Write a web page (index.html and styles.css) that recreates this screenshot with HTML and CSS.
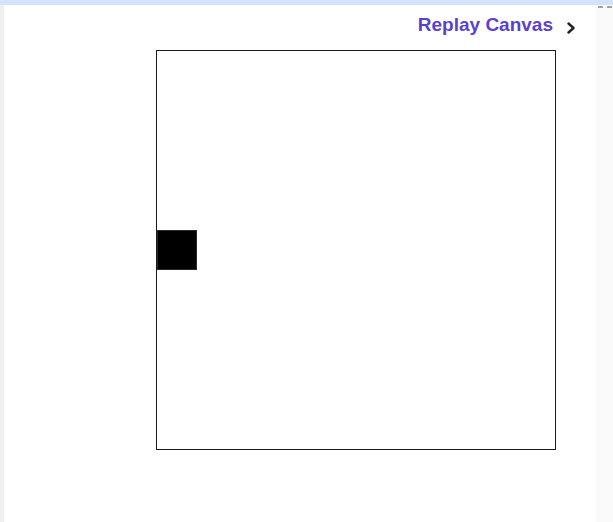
FILE: index.html
```html
<!DOCTYPE html>
<html>
<head>
<meta charset="utf-8">
<link rel="stylesheet" href="styles.css">
</head>
<body>
<div class="topbar"></div>
<div class="row">
  <div class="leftstrip"></div>
  <main class="main">
    <div class="header">
      <span class="title">Replay Canvas</span>
      <svg class="chev" width="10" height="12" viewBox="0 0 10 12"><path d="M2.5 1.5 L7.5 6 L2.5 10.5" fill="none" stroke="#222" stroke-width="2.4" stroke-linecap="round" stroke-linejoin="round"/></svg>
    </div>
    <div class="canvas">
      <div class="block"></div>
    </div>
  </main>
  <div class="rightstrip">
    <div class="marks"><span class="mark"></span><span class="mark"></span></div>
  </div>
</div>
</body>
</html>
```
FILE: styles.css
```css
html, body {
  margin: 0;
  padding: 0;
  height: 100%;
  background: #ffffff;
  font-family: "Liberation Sans", Arial, sans-serif;
}
body {
  display: flex;
  flex-direction: column;
  overflow: hidden;
}
.topbar {
  height: 5px;
  background: #d3e3fd;
  flex: none;
}
.row {
  flex: 1;
  display: flex;
}
.leftstrip {
  width: 4px;
  background: #efefef;
  flex: none;
}
.main {
  flex: 1;
  display: flex;
  flex-direction: column;
}
.header {
  display: flex;
  justify-content: flex-end;
  align-items: flex-start;
  margin-top: 9px;
  padding-right: 20px;
  height: 22px;
}
.title {
  font-size: 19px;
  line-height: 22px;
  font-weight: bold;
  color: #5b3fd1;
}
.chev {
  margin-left: 13px;
  margin-top: 8px;
  display: block;
}
.canvas {
  margin-top: 14px;
  margin-left: 152px;
  width: 398px;
  height: 398px;
  border: 1px solid #1a1a1a;
  position: relative;
}
.block {
  position: absolute;
  left: 0;
  top: 179px;
  width: 38px;
  height: 38px;
  background: #000;
  border: 1px solid #2a2a2a;
}
.rightstrip {
  width: 17px;
  background: #fafafa;
  flex: none;
}
.marks {
  display: flex;
  gap: 4px;
  padding: 0 0 0 2px;
}
.mark {
  width: 5px;
  height: 2px;
  margin-top: 1px;
  background: #a0a0a0;
  border-radius: 1px 1px 0 0;
}
```
